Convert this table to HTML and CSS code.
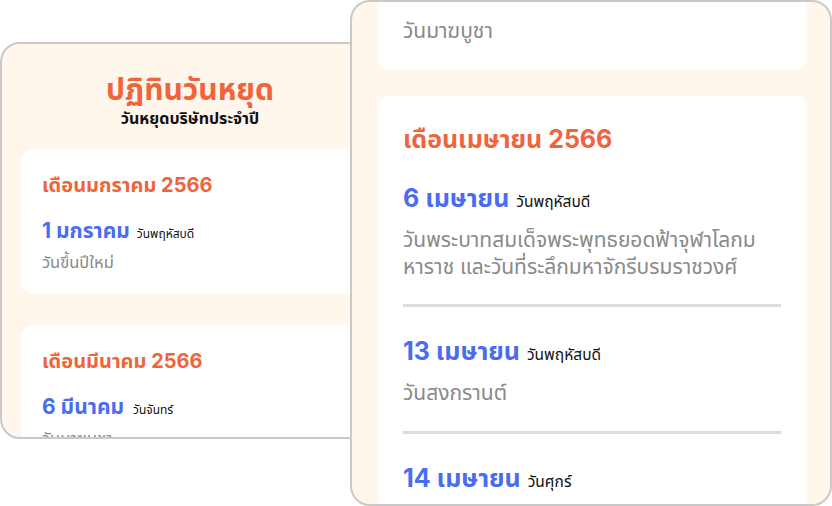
FILE: index.html
```html
<!DOCTYPE html>
<html lang="th">
<head>
<meta charset="utf-8">
<link rel="stylesheet" href="styles.css">
</head>
<body>
<div class="stage">
  <section class="window window-back">
    <header class="head">
      <h1 class="title">ปฏิทินวันหยุด</h1>
      <p class="subtitle">วันหยุดบริษัทประจำปี</p>
    </header>
    <div class="list list-back">
      <div class="card">
        <h2 class="month">เดือนมกราคม 2566</h2>
        <div class="item">
          <div class="date"><span class="day">1 มกราคม</span><span class="weekday">วันพฤหัสบดี</span></div>
          <p class="desc">วันขึ้นปีใหม่</p>
        </div>
      </div>
      <div class="card">
        <h2 class="month">เดือนมีนาคม 2566</h2>
        <div class="item">
          <div class="date"><span class="day">6 มีนาคม</span><span class="weekday wide">วันจันทร์</span></div>
          <p class="desc">วันมาฆบูชา</p>
        </div>
      </div>
    </div>
  </section>

  <section class="window window-front">
    <div class="list list-front">
      <div class="card card-cut">
        <p class="desc">วันมาฆบูชา</p>
      </div>
      <div class="card">
        <h2 class="month">เดือนเมษายน 2566</h2>
        <div class="item">
          <div class="date"><span class="day">6 เมษายน</span><span class="weekday">วันพฤหัสบดี</span></div>
          <p class="desc">วันพระบาทสมเด็จพระพุทธยอดฟ้าจุฬาโลกม<br>หาราช และวันที่ระลึกมหาจักรีบรมราชวงศ์</p>
        </div>
        <div class="item">
          <div class="date"><span class="day">13 เมษายน</span><span class="weekday">วันพฤหัสบดี</span></div>
          <p class="desc">วันสงกรานต์</p>
        </div>
        <div class="item item-last">
          <div class="date"><span class="day">14 เมษายน</span><span class="weekday">วันศุกร์</span></div>
        </div>
      </div>
    </div>
  </section>
</div>
</body>
</html>
```

FILE: styles.css
```css
* { box-sizing: border-box; margin: 0; padding: 0; }
html, body { width: 832px; height: 506px; overflow: hidden; background: #ffffff; }
body { font-family: "Inter", "Noto Sans Thai", sans-serif; }

.stage { position: relative; width: 832px; height: 506px; }

.window {
  position: absolute;
  background: #fff6ec;
  border: 2px solid #c9c9c9;
  border-radius: 20px;
  overflow: hidden;
}

.window-back { left: 0; top: 42px; width: 380px; height: 397px; padding: 0 19px; }
.window-front { left: 350px; top: 0; width: 482px; height: 506px; padding: 0 23px 0 26px; }

.head { text-align: center; padding-top: 26px; height: 105px; }
.title { font-size: 30px; font-weight: 700; color: #f0643c; line-height: 39px; }
.subtitle { font-size: 16px; font-weight: 700; color: #111; line-height: 18px; }

.list { display: flex; flex-direction: column; }
.list-back { gap: 31px; }
.list-front { gap: 26px; }

.card { background: #fff; border-radius: 12px; }

.list-back .card { padding: 23px 21px 21px; }
.list-back .month { font-size: 20px; font-weight: 700; color: #f0643c; line-height: 26px; }
.list-back .item { margin-top: 20px; }
.list-back .day { font-size: 21px; font-weight: 700; color: #4a6cf0; line-height: 26px; }
.list-back .weekday { font-size: 12px; color: #111; margin-left: 7px; }
.list-back .weekday.wide { margin-left: 9px; }
.list-back .desc { font-size: 16.5px; color: #8a8a8a; line-height: 22px; margin-top: 7px; }

.list-front .card { padding: 27px 26px 20px 25px; }
.list-front .card-cut { border-radius: 0 0 12px 12px; padding: 15px 25px 26px; }
.list-front .month { font-size: 25px; font-weight: 700; color: #f0643c; line-height: 32px; }
.list-front .item { margin-top: 27px; padding-bottom: 24px; border-bottom: 3px solid #dcdcdc; }
.list-front .item + .item { margin-top: 28px; padding-bottom: 25px; }
.list-front .item-last { border-bottom: 0; margin-top: 29px; }
.list-front .day { font-size: 25px; font-weight: 700; color: #4a6cf0; line-height: 32px; }
.list-front .weekday { font-size: 15.5px; color: #111; margin-left: 7px; }
.list-front .desc { font-size: 21px; color: #8a8a8a; line-height: 27px; margin-top: 12px; white-space: nowrap; }
.card-cut .desc { margin-top: 0; }

.date { display: flex; align-items: baseline; }
```
